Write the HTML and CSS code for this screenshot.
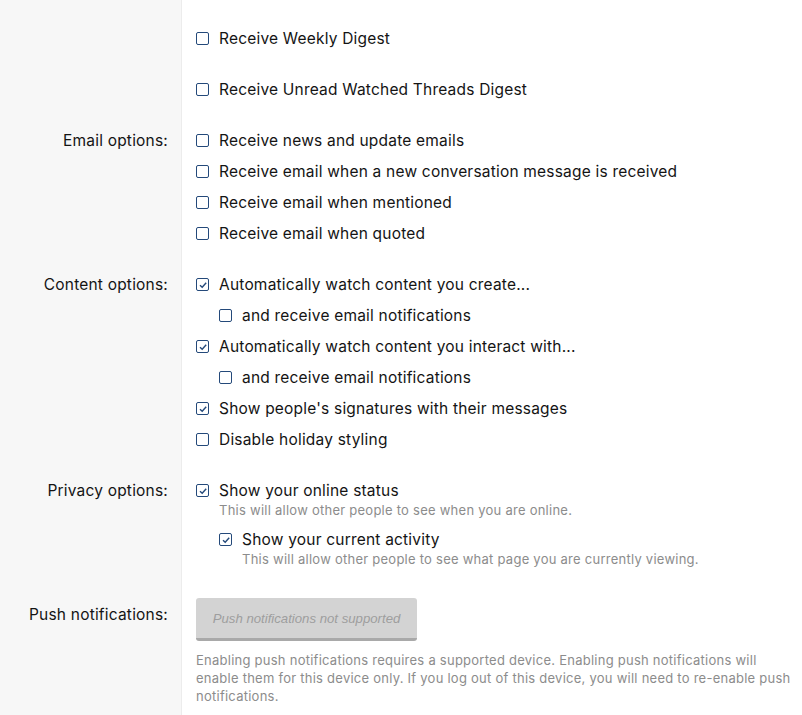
FILE: index.html
```html
<!DOCTYPE html>
<html lang="en">
<head>
<meta charset="utf-8">
<title>Preferences</title>
<link rel="stylesheet" href="styles.css">
</head>
<body>
<div class="form">
  <div class="row">
    <div class="label"></div>
    <div class="field">
      <ul class="choices">
        <li><label class="check"><span class="box"></span><span>Receive Weekly Digest</span></label></li>
      </ul>
    </div>
  </div>
  <div class="row">
    <div class="label"></div>
    <div class="field">
      <ul class="choices">
        <li><label class="check"><span class="box"></span><span>Receive Unread Watched Threads Digest</span></label></li>
      </ul>
    </div>
  </div>
  <div class="row">
    <div class="label">Email options:</div>
    <div class="field">
      <ul class="choices">
        <li><label class="check"><span class="box"></span><span>Receive news and update emails</span></label></li>
        <li><label class="check"><span class="box"></span><span>Receive email when a new conversation message is received</span></label></li>
        <li><label class="check"><span class="box"></span><span>Receive email when mentioned</span></label></li>
        <li><label class="check"><span class="box"></span><span>Receive email when quoted</span></label></li>
      </ul>
    </div>
  </div>
  <div class="row">
    <div class="label">Content options:</div>
    <div class="field">
      <ul class="choices">
        <li><label class="check"><span class="box checked"><svg viewBox="0 0 10 10"><path d="M2 5.2 L4.2 7.3 L8.2 2.8"/></svg></span><span>Automatically watch content you create...</span></label>
          <ul class="choices nested">
            <li><label class="check"><span class="box"></span><span>and receive email notifications</span></label></li>
          </ul>
        </li>
        <li><label class="check"><span class="box checked"><svg viewBox="0 0 10 10"><path d="M2 5.2 L4.2 7.3 L8.2 2.8"/></svg></span><span>Automatically watch content you interact with...</span></label>
          <ul class="choices nested">
            <li><label class="check"><span class="box"></span><span>and receive email notifications</span></label></li>
          </ul>
        </li>
        <li><label class="check"><span class="box checked"><svg viewBox="0 0 10 10"><path d="M2 5.2 L4.2 7.3 L8.2 2.8"/></svg></span><span>Show people's signatures with their messages</span></label></li>
        <li><label class="check"><span class="box"></span><span>Disable holiday styling</span></label></li>
      </ul>
    </div>
  </div>
  <div class="row">
    <div class="label">Privacy options:</div>
    <div class="field">
      <ul class="choices">
        <li><label class="check"><span class="box checked"><svg viewBox="0 0 10 10"><path d="M2 5.2 L4.2 7.3 L8.2 2.8"/></svg></span><span>Show your online status</span></label>
          <div class="hint indent">This will allow other people to see when you are online.</div>
          <ul class="choices nested">
            <li><label class="check"><span class="box checked"><svg viewBox="0 0 10 10"><path d="M2 5.2 L4.2 7.3 L8.2 2.8"/></svg></span><span>Show your current activity</span></label>
              <div class="hint indent">This will allow other people to see what page you are currently viewing.</div>
            </li>
          </ul>
        </li>
      </ul>
    </div>
  </div>
  <div class="row push">
    <div class="label">Push notifications:</div>
    <div class="field">
      <button class="btn" type="button" disabled>Push notifications not supported</button>
      <div class="hint explain">Enabling push notifications requires a supported device. Enabling push notifications will enable them for this device only. If you log out of this device, you will need to re-enable push notifications.</div>
    </div>
  </div>
</div>
</body>
</html>
```
FILE: styles.css
```css
html, body {
  margin: 0;
  padding: 0;
  background: #fff;
}
body {
  font-family: Inter, "Noto Sans", sans-serif;
  font-size: 15.5px;
  letter-spacing: 0.2px;
  color: #141414;
}
.form {
  padding-top: 13px;
  background: linear-gradient(to right, #f7f7f7 0, #f7f7f7 181px, #ececec 181px, #ececec 182px, #fff 182px);
  min-height: 715px;
  box-sizing: border-box;
}
.row {
  display: grid;
  grid-template-columns: 182px 1fr;
}
.label {
  text-align: right;
  padding: 15px 14px 0 0;
  line-height: 21px;
}
.field {
  padding: 10px 4px 10px 14px;
}
.choices {
  list-style: none;
  margin: 0;
  padding: 0;
}
.choices li {
  padding: 5px 0;
}
.choices.nested {
  padding-left: 23px;
}
.choices.nested li {
  padding: 10px 0 0;
}
.check {
  display: flex;
  align-items: center;
  gap: 10px;
  line-height: 21px;
}
.box {
  width: 13px;
  height: 13px;
  box-sizing: border-box;
  border: 1.7px solid #24497a;
  border-radius: 2px;
  flex: none;
  display: flex;
  align-items: center;
  justify-content: center;
}
.box svg {
  width: 10px;
  height: 10px;
  fill: none;
  stroke: #24497a;
  stroke-width: 1.4;
}
.hint {
  font-size: 13px;
  letter-spacing: 0.25px;
  line-height: 18px;
  color: #8c8c8c;
}
.indent {
  padding-left: 23px;
}
.push .label {
  padding-top: 21px;
}
.push .field {
  padding-top: 15px;
}
.btn {
  display: block;
  width: 221px;
  height: 43px;
  border: 0;
  border-bottom: 3px solid #a9a9a9;
  border-radius: 3px;
  background: #d3d3d3;
  font-family: "Liberation Sans", Arial, sans-serif;
  font-style: italic;
  font-size: 13.2px;
  letter-spacing: 0;
  color: #9e9e9e;
  padding: 0;
}
.explain {
  margin-top: 10px;
}
```
